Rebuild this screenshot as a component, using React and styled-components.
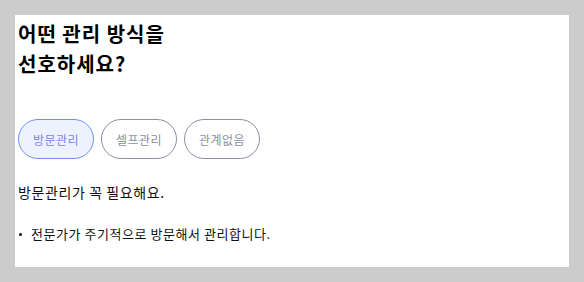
import React, { useState } from "react";
import styled, { createGlobalStyle } from "styled-components";

const GlobalStyle = createGlobalStyle`
  * {
    box-sizing: border-box;
  }
  body {
    margin: 0;
    padding: 15px;
    background: #cccccc;
    font-family: "Noto Sans CJK KR", "Noto Sans", sans-serif;
    color: #111111;
  }
`;

const Panel = styled.div`
  background: #ffffff;
  height: 252px;
  padding: 4px 3px;
`;

const Title = styled.h2`
  margin: 0;
  font-size: 20px;
  line-height: 30px;
  font-weight: 700;
  letter-spacing: 1px;
  color: #000000;
`;

const Options = styled.div`
  display: flex;
  gap: 7px;
  margin-top: 40px;
`;

const Option = styled.button`
  height: 40px;
  width: 76px;
  padding: 0;
  border-radius: 20px;
  border: 1px solid ${(p) => (p.$active ? "#6f8ef2" : "#8a90a0")};
  background: ${(p) => (p.$active ? "#edf2ff" : "#ffffff")};
  color: ${(p) => (p.$active ? "#7f82ee" : "#8a90a0")};
  font-family: inherit;
  font-size: 12px;
  letter-spacing: 0.5px;
  cursor: pointer;
`;

const Answer = styled.p`
  margin: 23px 0 0;
  font-size: 14px;
  line-height: 21px;
  letter-spacing: 0.6px;
`;

const List = styled.ul`
  list-style: none;
  margin: 21px 0 0;
  padding: 0;
`;

const Item = styled.li`
  display: flex;
  align-items: center;
  font-size: 13px;
  line-height: 20px;
  letter-spacing: 0.55px;

  &::before {
    content: "";
    width: 3px;
    height: 3px;
    border-radius: 50%;
    background: #111111;
    margin: 0 9px 0 1px;
  }
`;

const choices = ["방문관리", "셀프관리", "관계없음"];

export default function App() {
  const [selected, setSelected] = useState("방문관리");

  return (
    <>
      <GlobalStyle />
      <Panel>
        <Title>
          어떤 관리 방식을
          <br />
          선호하세요?
        </Title>
        <Options>
          {choices.map((c) => (
            <Option key={c} $active={selected === c} onClick={() => setSelected(c)}>
              {c}
            </Option>
          ))}
        </Options>
        <Answer>방문관리가 꼭 필요해요.</Answer>
        <List>
          <Item>전문가가 주기적으로 방문해서 관리합니다.</Item>
        </List>
      </Panel>
    </>
  );
}
